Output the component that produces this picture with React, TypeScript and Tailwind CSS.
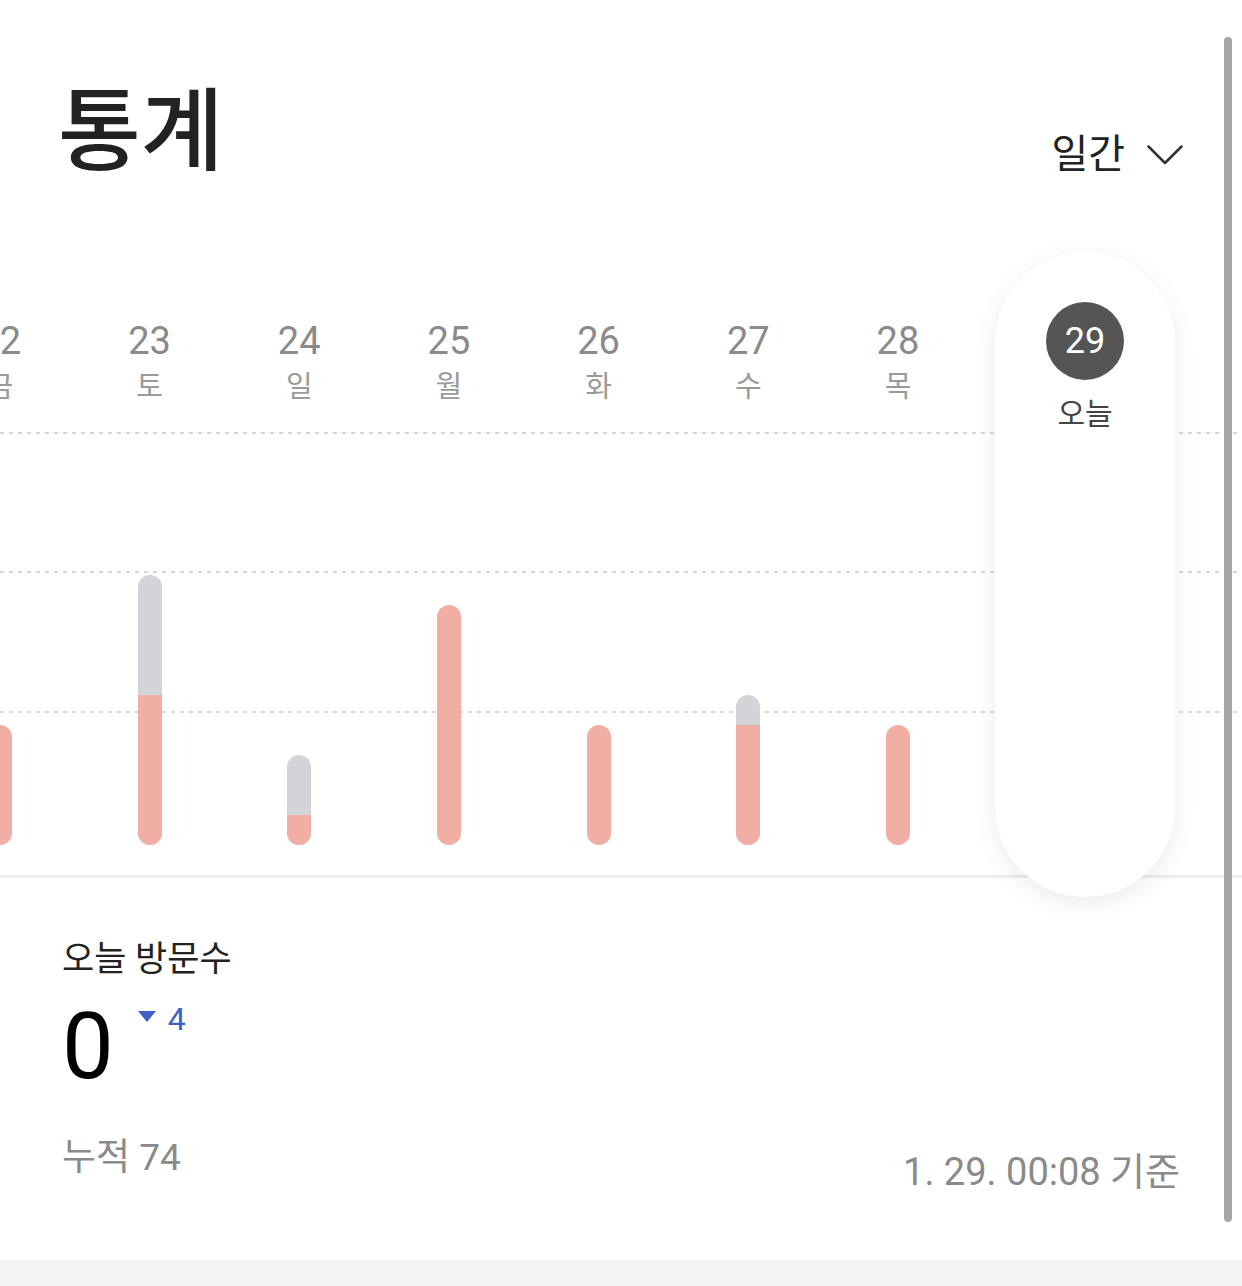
import React from 'react';

type Day = {
  date: number;
  label: string;
  total: number; // 방문수 (회색 포함 전체)
  unique: number; // 분홍 부분
};

const UNIT = 30;

const days: Day[] = [
  { date: 22, label: '금', total: 4, unique: 4 },
  { date: 23, label: '토', total: 9, unique: 5 },
  { date: 24, label: '일', total: 3, unique: 1 },
  { date: 25, label: '월', total: 8, unique: 8 },
  { date: 26, label: '화', total: 4, unique: 4 },
  { date: 27, label: '수', total: 5, unique: 4 },
  { date: 28, label: '목', total: 4, unique: 4 },
];

const gridLines = [180, 319, 459];

function Bar({ total, unique }: { total: number; unique: number }) {
  return (
    <div
      className="flex w-[24px] flex-col overflow-hidden rounded-full bg-[#d3d4d8]"
      style={{ height: total * UNIT }}
    >
      <div className="flex-1" />
      <div className="bg-[#f0aea5]" style={{ height: unique * UNIT }} />
    </div>
  );
}

function DayColumn({ day }: { day: Day }) {
  return (
    <div className="flex w-[149.7px] shrink-0 flex-col items-center">
      <div className="pt-[70px] text-[38px] leading-none text-[#8a8a8a]">{day.date}</div>
      <div className="mt-[13px] text-[29px] leading-none text-[#9a9a9a]">{day.label}</div>
      <div className="flex flex-1 items-end pb-[30px]">
        <Bar total={day.total} unique={day.unique} />
      </div>
    </div>
  );
}

function TodayColumn() {
  return (
    <div className="flex w-[224.4px] shrink-0 justify-center">
      <div className="relative z-10 flex h-[645px] w-[180px] flex-col items-center rounded-full bg-white pt-[50px] shadow-[0_6px_24px_rgba(0,0,0,0.08)]">
        <div className="flex h-[78px] w-[78px] items-center justify-center rounded-full bg-[#555555] text-[36px] leading-none text-white">
          29
        </div>
        <div className="mt-[19px] text-[30px] leading-none text-[#444444]">오늘</div>
      </div>
    </div>
  );
}

export default function App() {
  return (
    <div className="relative flex h-[1286px] w-[1242px] flex-col overflow-hidden bg-white font-['Roboto','Noto_Sans_CJK_KR',sans-serif]">
      <div className="flex flex-1 flex-col">
        {/* 헤더 */}
        <div className="flex items-start justify-between pl-[58px] pr-[59px] pt-[88px]">
          <h1 className="text-[90px] font-medium leading-none text-[#222222]">통계</h1>
          <button className="mt-[47px] flex items-center gap-[22px] text-[40px] leading-none text-[#222222]">
            <span>일간</span>
            <svg width="36" height="20" viewBox="0 0 36 20" fill="none">
              <polyline points="1.5,1.5 18,18 34.5,1.5" stroke="#333333" strokeWidth="2.5" strokeLinejoin="round" strokeLinecap="round" />
            </svg>
          </button>
        </div>

        {/* 차트 */}
        <div className="relative mt-[74px] h-[626px] border-b-[3px] border-[#ececec]">
          {gridLines.map((top) => (
            <div
              key={top}
              className="absolute left-0 right-0 h-[2px] bg-[repeating-linear-gradient(to_right,#d6d6d6_0_4px,transparent_4px_9px)]"
              style={{ top }}
            />
          ))}
          <div className="relative ml-[-75px] flex h-full">
            {days.map((d) => (
              <DayColumn key={d.date} day={d} />
            ))}
            <TodayColumn />
          </div>
        </div>

        {/* 방문수 */}
        <div className="flex flex-1 flex-col px-[62px] pt-[64px]">
          <div className="text-[35px] leading-none text-[#222222]">오늘 방문수</div>
          <div className="mt-[24px] flex items-start">
            <span className="text-[92px] leading-none text-black">0</span>
            <span className="ml-[24px] mt-[10px] h-0 w-0 border-x-[9px] border-t-[11px] border-x-transparent border-t-[#3f5fc8]" />
            <span className="ml-[12px] mt-[2px] text-[32px] leading-none text-[#3f5fc8]">4</span>
          </div>
          <div className="mt-[46px] flex items-start justify-between">
            <span className="text-[37px] leading-none text-[#8a8a8a]">누적 74</span>
            <span className="mt-[14px] text-[38px] leading-none text-[#8a8a8a]">1. 29. 00:08 기준</span>
          </div>
        </div>
      </div>

      <div className="h-[26px] shrink-0 bg-[#f5f5f5]" />

      {/* 스크롤바 */}
      <div className="absolute right-[10px] top-[37px] h-[1185px] w-[8px] rounded-full bg-[#a6a6a6]" />
    </div>
  );
}
